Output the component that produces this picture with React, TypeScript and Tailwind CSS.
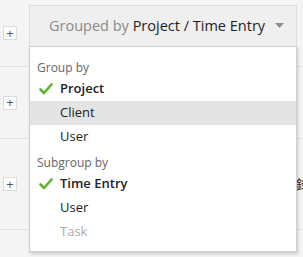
import type { ReactNode } from "react";

const FONT = "font-['Open_Sans','Liberation_Sans',sans-serif]";

function PlusBox() {
  return (
    <div className="ml-[3px] flex h-[14px] w-[14px] items-center justify-center border border-[#dcdcdc] bg-white text-[13px] leading-none text-[#555]">
      +
    </div>
  );
}

function Check() {
  return (
    <svg width="14" height="12" viewBox="0 0 14 12" className="shrink-0">
      <path d="M1.5 6.5 L5 10 L12.5 1.5" fill="none" stroke="#5cb52c" strokeWidth="2.6" strokeLinecap="round" strokeLinejoin="round" />
    </svg>
  );
}

function Header({ children }: { children: ReactNode }) {
  return <div className="h-[23px] pl-[7px] pt-[5px] text-[12px] leading-[17px] text-[#666]">{children}</div>;
}

function Item({ label, checked, active, disabled }: { label: string; checked?: boolean; active?: boolean; disabled?: boolean }) {
  return (
    <div
      className={`flex h-[24px] items-center gap-[7px] pl-[9px] text-[13px] ${active ? "bg-[#e4e4e4]" : ""} ${
        disabled ? "text-[#aaa]" : "text-[#222]"
      } ${checked ? "font-semibold" : ""}`}
    >
      <span className="flex w-[14px] justify-center">{checked ? <Check /> : null}</span>
      <span>{label}</span>
    </div>
  );
}

export default function App() {
  return (
    <div className={`relative h-[257px] w-[303px] overflow-hidden bg-[#f4f4f4] ${FONT}`}>
      {/* rows underneath */}
      <div className="flex flex-col">
        <div className="flex h-[67px] items-center border-b border-[#e2e2e2]">
          <PlusBox />
        </div>
        <div className="flex h-[72px] items-center border-b border-[#e2e2e2]">
          <PlusBox />
        </div>
        <div className="flex h-[91px] items-center border-b border-[#e2e2e2]">
          <PlusBox />
          <span className="ml-auto mr-[-6px] text-[13px] text-[#222] font-['Noto_Sans_CJK_SC',sans-serif]">錄</span>
        </div>
      </div>

      {/* grouping button */}
      <div className="absolute left-[29px] top-[5px] flex h-[42px] w-[268px] items-center border border-[#dedede] bg-[#efefef] pl-[19px] pr-[12px] text-[14.5px]">
        <span className="text-[#8a8a8a]">Grouped by&nbsp;</span>
        <span className="text-[#1e1e1e]">Project / Time Entry</span>
        <svg width="9" height="5" viewBox="0 0 9 5" className="ml-auto mt-[-2px]">
          <path d="M0 0 L9 0 L4.5 5 Z" fill="#8f8f8f" />
        </svg>
      </div>

      {/* dropdown */}
      <div className="absolute left-[29px] top-[46px] w-[268px] border border-[#cfcfcf] bg-white pb-[7px] pt-[7px] shadow-[1px_2px_3px_rgba(0,0,0,0.18)]">
        <Header>Group by</Header>
        <Item label="Project" checked />
        <Item label="Client" active />
        <Item label="User" />
        <Header>Subgroup by</Header>
        <Item label="Time Entry" checked />
        <Item label="User" />
        <Item label="Task" disabled />
      </div>
    </div>
  );
}
